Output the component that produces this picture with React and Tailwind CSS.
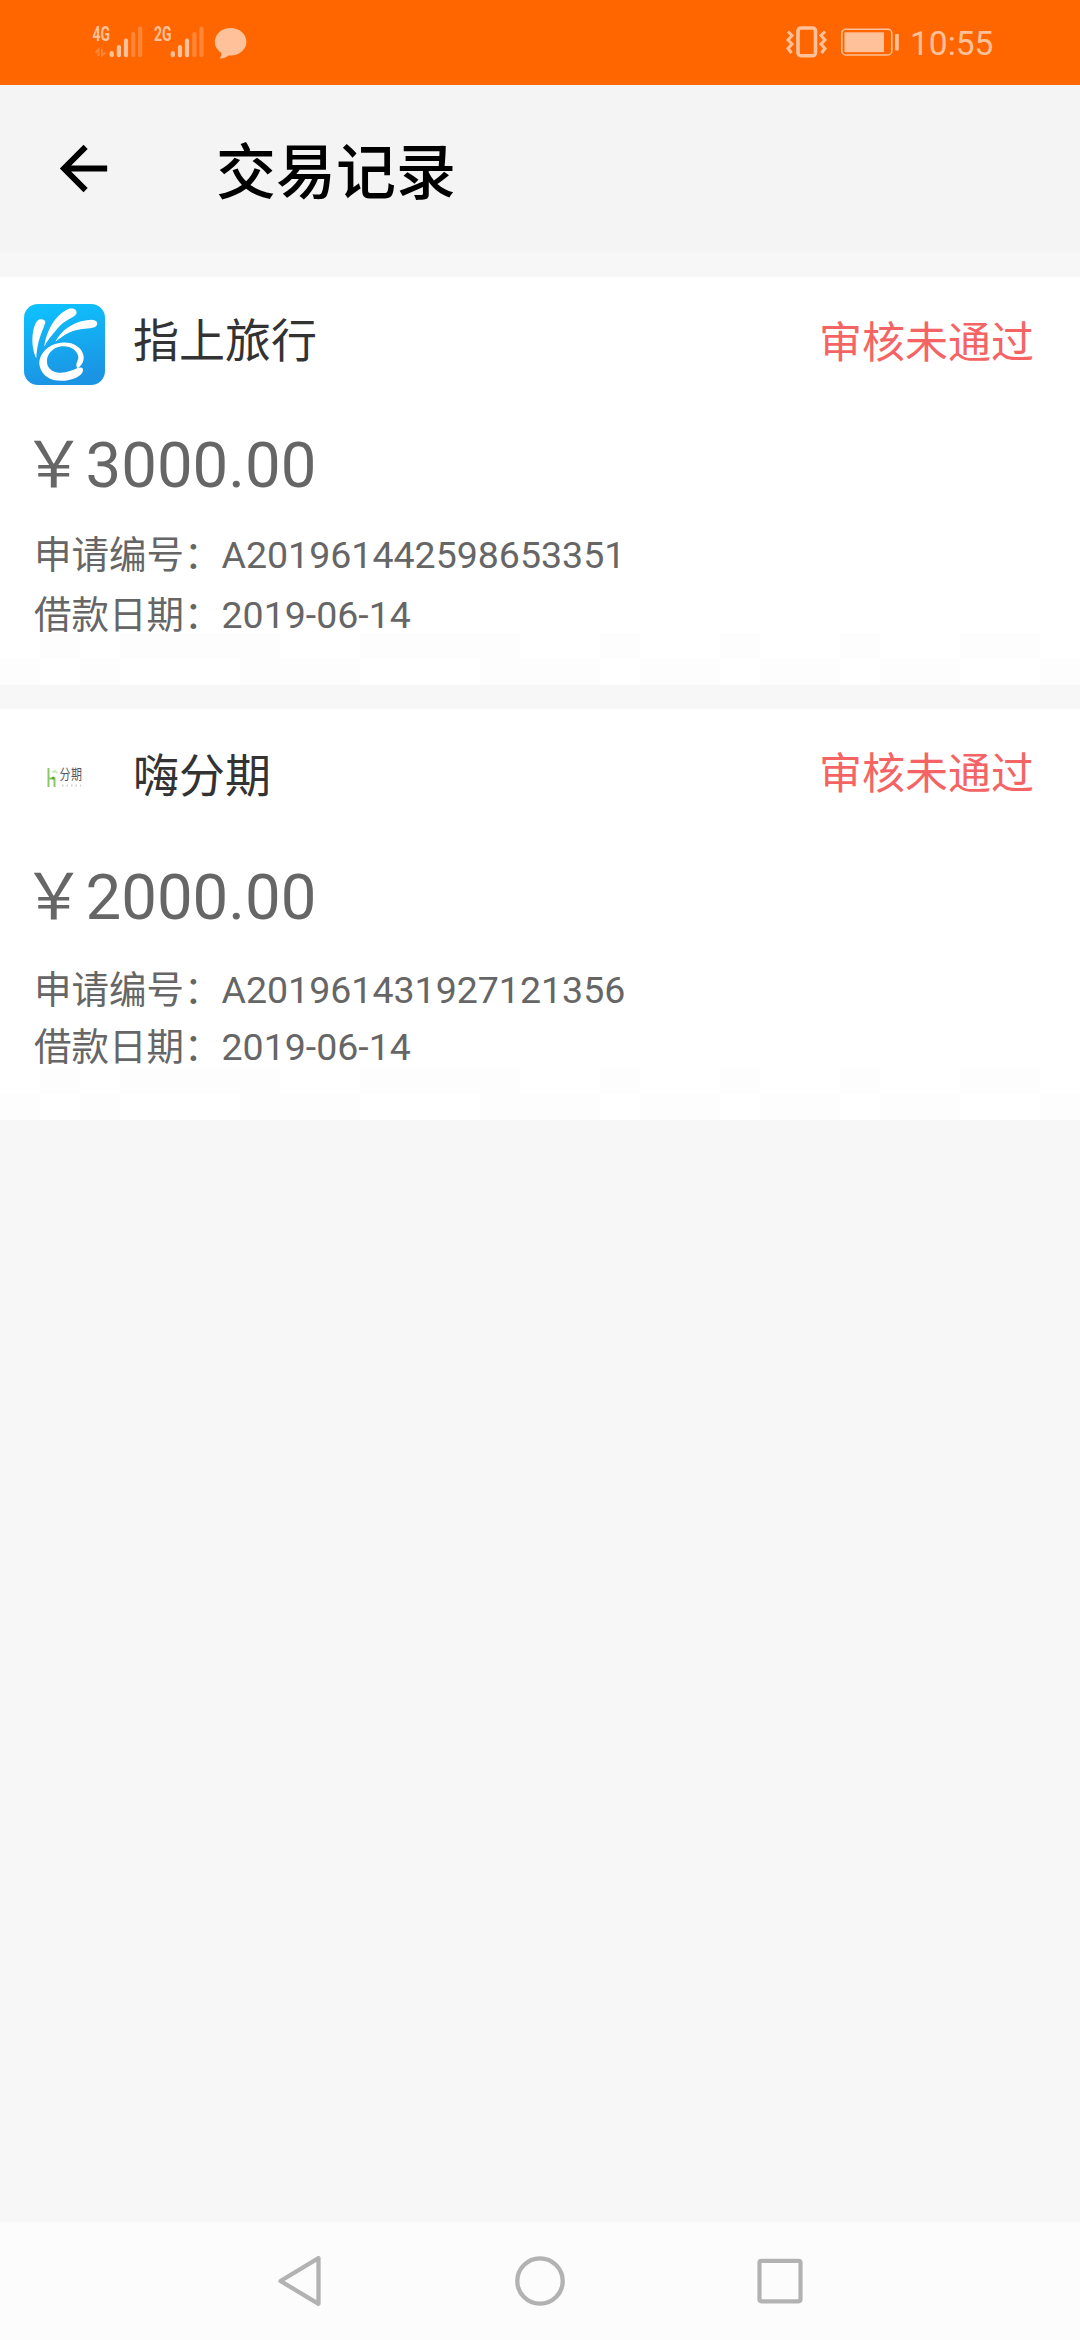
import React from "react";

const TINT = "#ffc199";
const DIM = "#ff8638";

function Signal({ label, x, xs, arrows }) {
  const tops = [51, 45, 38.5, 32, 26.5];
  return (
    <g>
      <text x={x} y="40.8" textLength="17.5" lengthAdjust="spacingAndGlyphs" fontSize="20" fontWeight="700" fill={TINT}>
        {label}
      </text>
      {arrows && <path d="M98.500 56V49.500l-3 3M102 49v6.500l3.500-3" fill="none" stroke={DIM} strokeWidth="2" />}
      {xs.map((c, i) => (
        <rect key={c} x={c - 2.1} y={tops[i]} width="4.200" height={57.3 - tops[i]} rx="2" fill={i < 3 ? TINT : DIM} />
      ))}
    </g>
  );
}

function StatusBar() {
  return (
    <div className="h-[85px] bg-[#ff6600] flex justify-between">
      <svg width="270" height="85" viewBox="0 0 270 85">
        <Signal label="4G" x={92.5} xs={[111.7, 118.9, 126, 133.2, 140.2]} arrows />
        <Signal label="2G" x={154} xs={[172.8, 180, 187, 194.4, 201.5]} />
        <ellipse cx="230.600" cy="41.800" rx="15.800" ry="13.800" fill={TINT} />
        <path d="M220 50c2.500 3 1.500 6-.5 8.400 5 .2 8-2 10-4z" fill={TINT} />
      </svg>
      <div className="flex">
        <svg width="130" height="85" viewBox="780 0 130 85" fill="none" stroke={TINT}>
          <rect x="798" y="28" width="17.500" height="27.800" rx="3" strokeWidth="3.600" />
          <path d="M788 31.500l4 4-4 4.500 4 4-4 4.500 3.500 4.500M825 31.500l-4 4 4 4.500-4 4 4 4.500-3.500 4.500" strokeWidth="3" />
          <rect x="841.800" y="29.300" width="50" height="25.700" rx="4" strokeWidth="1.500" />
          <rect x="844.500" y="32.300" width="39.500" height="19.900" fill={TINT} stroke="none" />
          <rect x="895" y="34" width="3.800" height="16.500" rx="1" fill={TINT} stroke="none" />
        </svg>
        <span className="w-[170px] h-[85px] text-[33.500px] leading-[87px] text-[#ffc199]">10:55</span>
      </div>
    </div>
  );
}

function Header() {
  return (
    <header className="h-[167px] bg-[#f4f4f4] flex items-center pl-[48px]">
      <svg className="w-[71px] h-[71px] shrink-0" viewBox="0 0 24 24">
        <path d="M20 11H7.830l5.590-5.590L12 4l-8 8 8 8 1.410-1.410L7.830 13H20v-2z" fill="#000" />
      </svg>
      <h1 className="ml-[97px] pt-[10px] text-[60px] leading-[80px] font-medium text-black">交易记录</h1>
    </header>
  );
}

function TravelLogo() {
  return (
    <svg className="w-[81px] h-[81px] shrink-0" viewBox="72 43 243 243">
      <defs>
        <linearGradient id="sky" x1="0" y1="0" x2="0.200" y2="1">
          <stop offset="0" stopColor="#0ec4ff" />
          <stop offset="1" stopColor="#1b94e4" />
        </linearGradient>
      </defs>
      <rect x="72" y="43" width="243" height="243" rx="42" fill="url(#sky)" />
      <g fill="#fff">
        <path d="M109 206C92 172 94 116 112 93c8-8 24-5 24 5-5 22-24 48-27 108z" />
        <path d="M133 171C138 126 165 75 205 58c16-5 28 3 24 14-5 12-35 16-58 46-16 20-30 34-38 53z" />
        <path d="M166 156c18-35 56-64 108-66 18 0 22 12 14 20-10 9-36 4-69 14-20 7-38 20-53 32z" />
        <path d="M233 236c14-10 21-26 17-40-6-26-34-41-67-37-42 5-70 38-64 70 7 32 38 48 76 44 34-4 54-18 54-32 0-9-9-9-18-5-18 8-35 15-55 13-21-2-34-14-35-31-2-24 17-45 43-48 26-3 47 10 51 31 1 9-7 17-6 27 1 4 2 6 4 8z" />
      </g>
    </svg>
  );
}

function InstallmentLogo() {
  return (
    <svg className="w-[81px] h-[81px] shrink-0" viewBox="24 737 81 81">
      <g fill="none" strokeWidth="2">
        <path d="M48.500 768v19" stroke="#8cc76a" />
        <path d="M49 778.500h5.500v8.500" stroke="#8cc76a" />
        <path d="M52 772h3.500M54 770l3.500 3" stroke="#c5e6b0" strokeWidth="1.600" />
      </g>
      <circle cx="53.200" cy="778" r="1.500" fill="#5aa834" />
      <text x="59.500" y="779" fontSize="11" textLength="22.500" lengthAdjust="spacing" transform="translate(0 -194.500) scale(1 1.250)" fill="#57535c">分期</text>
      <path d="M62 785.500h19" stroke="#cfcfcf" strokeWidth="2" strokeDasharray="1.500 3" />
    </svg>
  );
}

const TILE_ROWS = [
  "010111100111100100100100110",
  "101000111000111011011011001",
];

function TileStrip() {
  return (
    <div className="mt-auto h-[52px] grid grid-cols-[repeat(27,40px)] grid-rows-2">
      {TILE_ROWS.join("")
        .split("")
        .map((t, i) => (
          <span key={i} className={t === "1" ? "bg-[#fdfdfd]" : "bg-white"} />
        ))}
    </div>
  );
}

const records = [
  {
    id: "A201961442598653351",
    name: "指上旅行",
    amount: "￥3000.00",
    date: "2019-06-14",
    Logo: TravelLogo,
    card: "h-[408px] pt-[27px]",
    nameRow: "mt-[7px]",
    statusRow: "mt-[9px]",
    amountRow: "mt-[41px]",
    numberRow: "mt-[19px] h-[60px]",
  },
  {
    id: "A201961431927121356",
    name: "嗨分期",
    amount: "￥2000.00",
    date: "2019-06-14",
    Logo: InstallmentLogo,
    card: "h-[411px] pt-[28px]",
    nameRow: "mt-[9px]",
    statusRow: "mt-[7px]",
    amountRow: "mt-[40px]",
    numberRow: "mt-[22px] h-[57px]",
  },
];

function RecordCard({ r }) {
  const Logo = r.Logo;
  return (
    <article className={`bg-white flex flex-col ${r.card}`}>
      <div className="h-[81px] pl-6 pr-[46px] flex items-start">
        <Logo />
        <h2 className={`ml-[28px] text-[46px] leading-[60px] text-[#333333] ${r.nameRow}`}>{r.name}</h2>
        <span className={`ml-auto text-[43px] leading-[60px] text-[#f56464] ${r.statusRow}`}>审核未通过</span>
      </div>
      <div className={`h-[80px] pl-[22px] text-[63.500px] leading-[80px] text-[#666666] whitespace-nowrap ${r.amountRow}`}>{r.amount}</div>
      <div className={`pl-[34px] text-[37.500px] leading-[60px] text-[#666666] ${r.numberRow}`}>申请编号：{r.id}</div>
      <div className="h-[46px] pl-[34px] text-[37.500px] leading-[60px] text-[#666666]">借款日期：{r.date}</div>
      <TileStrip />
    </article>
  );
}

function NavBar() {
  return (
    <nav className="h-[118px] bg-[#fcfcfc] flex justify-center items-center gap-[180px]">
      <svg width="60" height="60" viewBox="270 2251 60 60" fill="none" stroke="#b2b2b2" strokeWidth="4.300" strokeLinejoin="round">
        <path d="M280.500 2281L318.500 2258.200V2303.800Z" />
      </svg>
      <svg width="60" height="60" viewBox="510 2251 60 60" fill="none" stroke="#b2b2b2" strokeWidth="4.300">
        <circle cx="540" cy="2281" r="22.700" />
      </svg>
      <svg width="60" height="60" viewBox="750 2251 60 60" fill="none" stroke="#b2b2b2" strokeWidth="4.200">
        <rect x="759.500" y="2260.800" width="41" height="40.500" rx="2" />
      </svg>
    </nav>
  );
}

export default function App() {
  return (
    <div lang="zh-CN" className="w-[1080px] h-[2340px] bg-[#f7f7f7] flex flex-col overflow-hidden font-['Roboto','Noto_Sans_CJK_SC',sans-serif]">
      <StatusBar />
      <Header />
      <main className="flex-1 pt-[25px] flex flex-col gap-6">
        {records.map((r) => (
          <RecordCard key={r.id} r={r} />
        ))}
      </main>
      <NavBar />
    </div>
  );
}
